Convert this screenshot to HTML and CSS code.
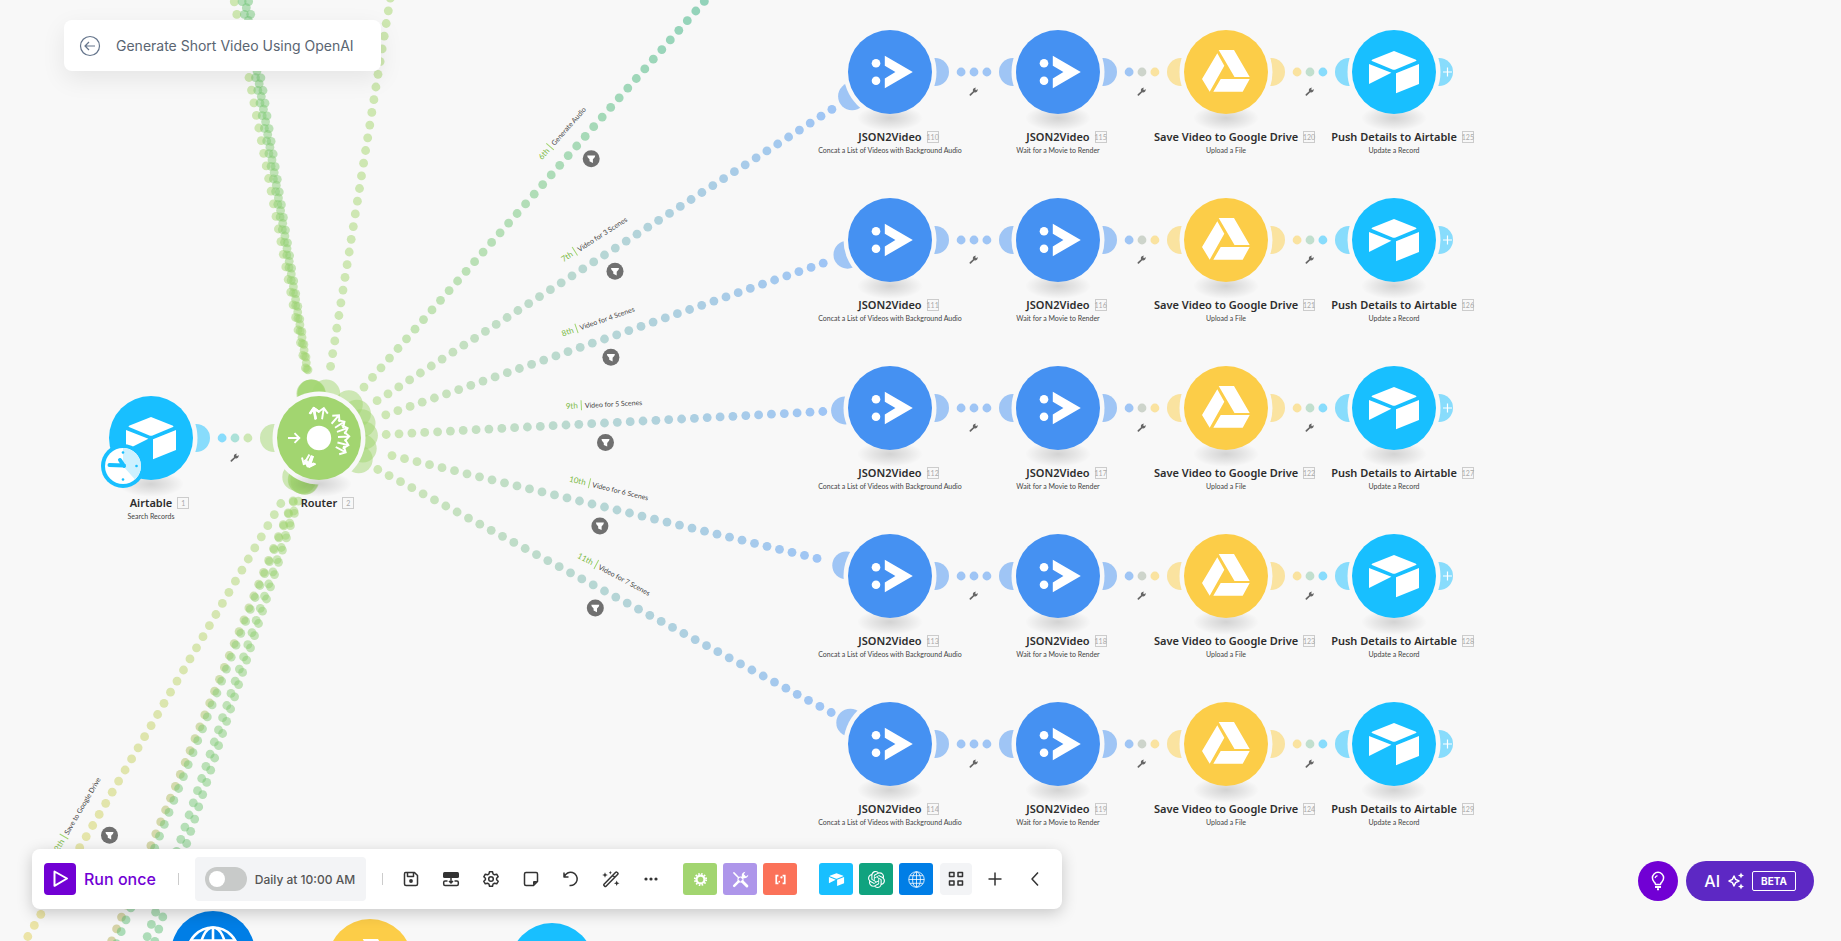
FILE: index.html
```html
<!DOCTYPE html>
<html lang="en">
<head>
<meta charset="utf-8">
<title>Generate Short Video Using OpenAI</title>
<link rel="stylesheet" href="styles.css">
</head>
<body>
<svg class="symbols" aria-hidden="true">
  <symbol id="i-airtable" viewBox="-42 -42 84 84">
    <path d="M0-21 22-12.3Q23-11.6 22-11L1-2.3Q0-2-1-2.3L-22-11Q-23-11.6-22-12.3Z"/>
    <path d="M2 1.2 25-8V12L2 21.2ZM-25-8-2.6.8-25 12Z"/>
  </symbol>
  <symbol id="i-drive" viewBox="-42 -42 84 84">
    <path d="M-7.3-22H8L23.7 5H8.5ZM-8.7-18.7-1.7-6.3-16.3 19.7-24 7ZM-5.3 7H23.7L16.7 19.7H-12.7Z"/>
  </symbol>
  <symbol id="i-json" viewBox="-42 -42 84 84">
    <circle cx="-14" cy="-8.7" r="4.3"/><circle cx="-14" cy="8.8" r="4.3"/>
    <path d="M-5.2-16.2 22.8 0-5.2 16.2V6.6L5.4 0-5.2-6.3Z"/>
  </symbol>
  <symbol id="i-http" viewBox="-42 -42 84 84">
    <g fill="none" stroke="currentColor" stroke-width="2.6">
      <circle r="25.5"/><ellipse rx="13" ry="25.5"/><path d="M0-25.5V25.5M-25.5 0H25.5M-22-12.5H22M-22 12.5H22"/>
    </g>
  </symbol>
  <symbol id="i-wrench" viewBox="0 0 10 10">
    <path d="M9.4 2.3 7.9 3.6 6.7 2.3 8 .9A2.8 2.8 0 0 0 4.5 4.6L.8 8A1 1 0 0 0 2.2 9.4L5.8 5.9A2.8 2.8 0 0 0 9.4 2.3Z"/>
  </symbol>
  <symbol id="i-openai" viewBox="0 0 24 24">
    <path d="M22.2819 9.8211a5.9847 5.9847 0 0 0-.5157-4.9108 6.0462 6.0462 0 0 0-6.5098-2.9A6.0651 6.0651 0 0 0 4.9807 4.1818a5.9847 5.9847 0 0 0-3.9977 2.9 6.0462 6.0462 0 0 0 .7427 7.0966 5.98 5.98 0 0 0 .511 4.9107 6.051 6.051 0 0 0 6.5146 2.9001A5.9847 5.9847 0 0 0 13.2599 24a6.0557 6.0557 0 0 0 5.7718-4.2058 5.9894 5.9894 0 0 0 3.9977-2.9001 6.0557 6.0557 0 0 0-.7475-7.0729zm-9.022 12.6081a4.4755 4.4755 0 0 1-2.8764-1.0408l.1419-.0804 4.7783-2.7582a.7948.7948 0 0 0 .3927-.6813v-6.7369l2.02 1.1686a.071.071 0 0 1 .038.052v5.5826a4.504 4.504 0 0 1-4.4945 4.4944zm-9.6607-4.1254a4.4708 4.4708 0 0 1-.5346-3.0137l.142.0852 4.783 2.7582a.7712.7712 0 0 0 .7806 0l5.8428-3.3685v2.3324a.0804.0804 0 0 1-.0332.0615L9.74 19.9502a4.4992 4.4992 0 0 1-6.1408-1.6464zM2.3408 7.8956a4.485 4.485 0 0 1 2.3655-1.9728V11.6a.7664.7664 0 0 0 .3879.6765l5.8144 3.3543-2.0201 1.1685a.0757.0757 0 0 1-.071 0l-4.8303-2.7865A4.504 4.504 0 0 1 2.3408 7.872zm16.5963 3.8558L13.1038 8.364 15.1192 7.2a.0757.0757 0 0 1 .071 0l4.8303 2.7913a4.4944 4.4944 0 0 1-.6765 8.1042v-5.6772a.79.79 0 0 0-.407-.667zm2.0107-3.0231l-.142-.0852-4.7735-2.7818a.7759.7759 0 0 0-.7854 0L9.409 9.2297V6.8974a.0662.0662 0 0 1 .0284-.0615l4.8303-2.7866a4.4992 4.4992 0 0 1 6.6802 4.66zM8.3065 12.863l-2.02-1.1638a.0804.0804 0 0 1-.038-.0567V6.0742a4.4992 4.4992 0 0 1 7.3757-3.4537l-.142.0805L8.704 5.459a.7948.7948 0 0 0-.3927.6813zm1.0976-2.3654l2.602-1.4998 2.6069 1.4998v2.9994l-2.5974 1.4997-2.6067-1.4997Z"/>
  </symbol>
  <radialGradient id="shade"><stop offset="0" stop-color="#000" stop-opacity=".15"/><stop offset=".5" stop-color="#000" stop-opacity=".08"/><stop offset="1" stop-color="#000" stop-opacity="0"/></radialGradient>
</svg>

<main class="canvas" id="canvas">
  <svg class="links" id="links" aria-hidden="true"></svg>
</main>

<header class="title-bar">
  <button class="back" type="button" aria-label="Back">
    <svg viewBox="0 0 22 22"><circle cx="11" cy="11" r="9.5"/><path d="M16 11H6.2M10 7 6 11 10 15"/></svg>
  </button>
  <h1 class="title">Generate Short Video Using OpenAI</h1>
</header>

<div class="toolbar" role="toolbar" aria-label="Scenario controls">
  <button class="run" type="button">
    <span class="run-icon"><svg viewBox="0 0 32 32"><path d="M10.500 8.500 23 15.500 10.500 22.800Z"/></svg></span>
    Run once
  </button>
  <span class="divider"></span>
  <label class="schedule">
    <input class="toggle" type="checkbox" role="switch">
    <span>Daily at 10:00 AM</span>
  </label>
  <span class="divider"></span>
  <div class="tools">
    <button class="tool" type="button" aria-label="Save"><svg viewBox="0 0 18 18"><path d="M3.500 2.500H12.500L15.500 5.500V14Q15.500 15.500 14 15.500H4Q2.500 15.500 2.500 14V4Q2.500 2.500 3.500 2.500ZM5.500 3V6.500H11.500V3"/><circle class="solid" cx="9" cy="11" r="1.900"/></svg></button>
    <button class="tool" type="button" aria-label="Align"><svg viewBox="0 0 18 18"><rect class="solid" x="1" y="2" width="16" height="6" rx="1.500"/><path d="M5.500 11H3Q1.700 11 1.700 12.300V14Q1.700 15.500 3 15.500H15Q16.300 15.500 16.300 14V12.300Q16.300 11 15 11H12.500M9 8V12.500M7 11 9 13 11 11"/></svg></button>
    <button class="tool" type="button" aria-label="Settings"><svg viewBox="0 0 18 18"><circle cx="9" cy="9" r="2.300"/><path d="M7.500 1.700H10.500L11 3.900 12.500 4.800 14.700 4.200 16.200 6.800 14.600 8.300V9.800L16.200 11.300 14.700 13.800 12.500 13.200 11 14.100 10.500 16.300H7.500L7 14.100 5.500 13.200 3.300 13.800 1.800 11.300 3.400 9.800V8.300L1.800 6.800 3.300 4.200 5.500 4.800 7 3.900Z"/></svg></button>
    <button class="tool" type="button" aria-label="Notes"><svg viewBox="0 0 18 18"><path d="M4 2.500H14.200Q15.500 2.500 15.500 4V11.500L11.500 15.500H4Q2.500 15.500 2.500 14V4Q2.500 2.500 4 2.500Z"/><path class="solid" d="M11 15.500V12Q11 11 12 11H15.500Z"/></svg></button>
    <button class="tool" type="button" aria-label="Undo"><svg viewBox="0 0 18 18"><path d="M2 2.500V7H6.500M2.400 6.600A6.600 6.600 0 1 1 7.500 15.400"/></svg></button>
    <button class="tool" type="button" aria-label="Auto-align"><svg viewBox="0 0 18 18"><path d="M2 14.200 13.700 2.300Q14.400 1.700 15 2.300L15.800 3Q16.400 3.700 15.800 4.300L4 16.200Q3.300 16.800 2.700 16.200L2 15.500Q1.400 14.900 2 14.200ZM10.700 5.300 12.900 7.300"/><path class="solid" d="M3 2.200 3.800 4.200 5.800 5 3.800 5.800 3 7.800 2.200 5.800.2 5 2.200 4.200ZM14.700 10.500 15.500 12.500 17.500 13.300 15.500 14.100 14.700 16.100 13.900 14.100 11.900 13.300 13.900 12.500ZM8.300.8 8.800 2.300 10 2.800 8.800 3.300 8.300 4.500 7.800 3.300 6.800 2.800 7.800 2.300Z"/></svg></button>
    <button class="tool" type="button" aria-label="More"><svg viewBox="0 0 18 18"><g class="solid"><circle cx="4" cy="9" r="1.600"/><circle cx="9" cy="9" r="1.600"/><circle cx="14" cy="9" r="1.600"/></g></svg></button>
  </div>
  <div class="tiles">
    <button class="tile tile-flow" type="button" aria-label="Flow control"><svg viewBox="0 0 18 18"><circle cx="9" cy="9" r="4.200" fill="none" stroke="currentColor" stroke-width="2.400"/><circle cx="9" cy="9" r="6" fill="none" stroke="currentColor" stroke-width="2" stroke-dasharray="1.600 1.540"/></svg></button>
    <button class="tile tile-tools" type="button" aria-label="Tools"><svg viewBox="0 0 18 18"><g fill="none" stroke="currentColor" stroke-linecap="round"><path d="M2 2 6.800 6.800" stroke-width="1.600"/><path d="M11 11 15.800 15.800" stroke-width="3"/><path d="M12.300 5.700 11 7M7 11 2.300 15.700" stroke-width="2.600"/><circle cx="9" cy="9" r="2.700" stroke-width="1.200"/></g><path d="M17.300 4 14.800 5.800 12.500 3.500 14.200 .8A4 4 0 0 0 10.500 6L12.500 7.700A4 4 0 0 0 17.300 4Z"/></svg></button>
    <button class="tile tile-parser" type="button" aria-label="Text parser"><svg viewBox="0 0 18 18"><path d="M6.800 5H4.500V13H6.800M11.200 5H13.500V13H11.200" fill="none" stroke="currentColor" stroke-width="1.800"/><circle cx="7.700" cy="11.300" r=".9"/><circle cx="10" cy="6.800" r="1.200"/></svg></button>
  </div>
  <div class="tiles tiles-apps">
    <button class="tile tile-airtable" type="button" aria-label="Airtable"><svg viewBox="-28 -28 56 56"><use href="#i-airtable" x="-42" y="-42" width="84" height="84"/></svg></button>
    <button class="tile tile-openai" type="button" aria-label="OpenAI"><svg viewBox="0 0 24 24"><use href="#i-openai"/></svg></button>
    <button class="tile tile-http" type="button" aria-label="HTTP"><svg viewBox="-28 -28 56 56"><use href="#i-http" x="-42" y="-42" width="84" height="84"/></svg></button>
  </div>
  <button class="tool grid-tool" type="button" aria-label="All apps"><svg viewBox="0 0 18 18"><path d="M2.500 2.500H7V6.500H2.500ZM11 2.500H15.500V6.500H11ZM2.500 11H7V15H2.500ZM11 11H15.500V15H11Z"/></svg></button>
  <button class="tool" type="button" aria-label="Add module"><svg viewBox="0 0 18 18"><path d="M9 2.500V15.500M2.500 9H15.500"/></svg></button>
  <button class="tool" type="button" aria-label="Collapse"><svg viewBox="0 0 18 18"><path d="M12 2.500 6 9 12 15.500"/></svg></button>
</div>

<div class="assist">
  <button class="hint" type="button" aria-label="Tips"><svg viewBox="0 0 20 20"><path d="M7.500 13.500Q7.500 12 6 10.800A5.600 5.600 0 1 1 14 10.800Q12.500 12 12.500 13.500Z"/><path d="M7 7A3.200 3.200 0 0 1 9.500 4.600" stroke-width="1.200"/><path d="M7 16H13M9 18.300H11" stroke-width="2"/></svg></button>
  <button class="ai" type="button">
    <span>AI</span>
    <svg viewBox="0 0 18 18"><path d="M7 4 8.600 7.400 12 9 8.600 10.600 7 14 5.400 10.600 2 9 5.400 7.400Z"/><path class="solid" d="M14 .5 14.900 2.600 17 3.500 14.900 4.400 14 6.500 13.100 4.400 11 3.500 13.100 2.600ZM14 11.500 14.900 13.600 17 14.500 14.900 15.400 14 17.500 13.100 15.400 11 14.500 13.100 13.600Z"/></svg>
    <span class="beta">BETA</span>
  </button>
</div>
<script src="canvas.js"></script>
</body>
</html>
```
FILE: styles.css
```css
* { box-sizing: border-box; }

body {
  margin: 0;
  min-height: 100vh;
  overflow: hidden;
  background: #f8f8f8;
  font-family: Inter, "Liberation Sans", sans-serif;
  color: #2d2d2d;
}

button {
  margin: 0;
  padding: 0;
  border: 0;
  background: none;
  font: inherit;
  color: inherit;
  cursor: pointer;
}

svg { display: block; }

.symbols { position: absolute; width: 0; height: 0; }

/* canvas */
.canvas {
  position: relative;
  height: 100vh;
  overflow: hidden;
  font-family: Lato, "Open Sans", sans-serif;
}

.links { width: 100%; height: 100%; }

.node {
  position: absolute;
  display: flex;
  flex-direction: column;
  align-items: center;
  width: 168px;
  margin: -42px 0 0 -84px;
}

.disc { width: 84px; height: 84px; border-radius: 50%; color: #fff; fill: #fff; }
.airtable { background: #18bfff; }
.drive { background: #fccd48; }
.json { background: #4591f2; }
.http { background: #007ee6; }
.router { background: #a2d570; }

.name {
  position: relative;
  margin: 15px 0 0;
  font-family: "Noto Sans", "Open Sans", sans-serif;
  font-size: 11px;
  line-height: 16px;
  font-weight: 600;
  white-space: nowrap;
}

.badge {
  position: absolute;
  left: calc(100% + 5px);
  top: 2px;
  width: 12px;
  height: 12px;
  border: 1px solid #ccc;
  font-family: Lato, "Open Sans", sans-serif;
  font-size: 7px;
  line-height: 10px;
  font-weight: 400;
  color: #aaa;
  display: flex;
  justify-content: center;
}

.note {
  margin: 0;
  font-size: 7px;
  line-height: 10px;
  white-space: nowrap;
  color: #444;
}

.clock { position: absolute; left: 33px; top: 47px; width: 46px; height: 46px; }

.route {
  position: absolute;
  display: flex;
  align-items: center;
  gap: 3px;
  font-size: 7px;
  line-height: 10px;
  white-space: nowrap;
  color: #444;
}

.route-order {
  padding-right: 3px;
  border-right: 1px solid #a2d570;
  font-size: 8px;
  color: #79b843;
}

/* title */
.title-bar {
  position: absolute;
  left: 64px;
  top: 20px;
  display: flex;
  align-items: center;
  gap: 15px;
  padding: 14px 27px 14px 15px;
  border-radius: 8px;
  background: #fff;
  box-shadow: 0 8px 24px rgba(0, 0, 0, .08);
}

.back svg {
  width: 22px;
  height: 22px;
  fill: none;
  stroke: #64748b;
  stroke-width: 1.2;
}

.title {
  margin: 0;
  font-size: 14px;
  line-height: 23px;
  font-weight: 400;
  color: #5a6572;
}

/* toolbar */
.toolbar {
  position: absolute;
  left: 32px;
  bottom: 32px;
  display: flex;
  align-items: center;
  height: 60px;
  padding: 0 7px 0 12px;
  border-radius: 8px;
  background: #fff;
  box-shadow: 0 4px 16px rgba(0, 0, 0, .2);
}

.run {
  display: flex;
  align-items: center;
  gap: 8px;
  font-size: 16px;
  font-weight: 500;
  color: #7100d4;
}

.run-icon { border-radius: 4px; background: #7100d4; }
.run-icon svg { width: 32px; height: 32px; fill: none; stroke: #fff; stroke-width: 2; stroke-linejoin: round; }

.divider { width: 1px; height: 12px; background: #ccc; margin: 0 16px 0 22px; }
.schedule + .divider { margin: 0 8px 0 16px; }

.schedule {
  display: flex;
  align-items: center;
  gap: 8px;
  height: 44px;
  padding: 0 11px 0 10px;
  border-radius: 4px;
  background: #f3f4f6;
  font-size: 12px;
  font-weight: 500;
  color: #555;
}

.toggle {
  appearance: none;
  display: flex;
  align-items: center;
  width: 42px;
  height: 24px;
  margin: 0;
  padding: 4px;
  border-radius: 12px;
  background: #c8cac9;
}
.toggle::before { content: ""; width: 16px; height: 16px; border-radius: 50%; background: #fff; }
.toggle:checked { justify-content: flex-end; background: #7100d4; }

.tools { display: flex; margin-right: 12px; }
.tool { display: flex; align-items: center; justify-content: center; width: 40px; height: 32px; }
.tool svg { width: 18px; height: 18px; fill: none; stroke: #333; stroke-width: 1.5; stroke-linejoin: round; }
.tool .solid { fill: #333; stroke: none; }

.tiles { display: flex; gap: 6px; }
.tiles-apps { margin-left: 22px; }
.tile { display: flex; align-items: center; justify-content: center; width: 34px; height: 32px; border-radius: 3px; color: #fff; fill: #fff; }
.tile svg { width: 17px; height: 17px; }
.tile-flow { background: #a2d570; }
.tile-tools { background: #ae96ea; }
.tile-parser { background: #fb7259; }
.tile-airtable { background: #18bfff; }
.tile-openai { background: #10a37f; }
.tile-http { background: #007ee6; }

.grid-tool { width: 32px; margin: 0 3px 0 7px; border-radius: 4px; background: #f3f4f6; }

/* assistant buttons */
.assist {
  position: absolute;
  right: 27px;
  bottom: 40px;
  display: flex;
  gap: 8px;
}

.hint, .ai { display: flex; align-items: center; height: 40px; border-radius: 20px; }
.hint { justify-content: center; width: 40px; background: #7100d4; }
.hint svg, .ai svg { width: 20px; height: 20px; fill: none; stroke: #fff; stroke-width: 1.5; stroke-linejoin: round; }
.ai {
  gap: 7px;
  padding: 0 18px;
  background: #5d28c4;
  font-size: 16px;
  font-weight: 500;
  color: #fff;
}
.ai svg { width: 18px; height: 18px; }
.ai .solid { fill: #fff; stroke: none; }
.beta {
  width: 44px;
  border: 1px solid #fff;
  border-radius: 2px;
  font-size: 10px;
  line-height: 18px;
  font-weight: 700;
}
```
FILE: canvas.js
```js
const COLORS = { airtable: '#18bfff', drive: '#fccd48', json: '#4591f2', http: '#007ee6', router: '#a2d570', openai: '#10a37f' };
const PORT = 45, STEP = 12.86, CLEAR = 66;

const nodes = [
  { kind: 'airtable', x: 151, y: 438, name: 'Airtable', id: 1, note: 'Search Records', clock: true },
  { kind: 'router', x: 319, y: 438, name: 'Router', id: 2 },
  { kind: 'http', x: 213, y: 953 },
  { kind: 'drive', x: 370, y: 961 },
  { kind: 'airtable', x: 552, y: 965 },
];
const links = [];
const start = nodes[0], router = nodes[1];

[72, 240, 408, 576, 744].forEach((y, i) => {
  const row = [
    { kind: 'json', x: 890, y, name: 'JSON2Video', id: 110 + i, note: 'Concat a List of Videos with Background Audio' },
    { kind: 'json', x: 1058, y, name: 'JSON2Video', id: 115 + i, note: 'Wait for a Movie to Render' },
    { kind: 'drive', x: 1226, y, name: 'Save Video to Google Drive', id: 120 + i, note: 'Upload a File' },
    { kind: 'airtable', x: 1394, y, name: 'Push Details to Airtable', id: 125 + i, note: 'Update a Record', open: true },
  ];
  nodes.push(...row);
  for (let k = 0; k < 3; k++) links.push({ a: row[k], b: row[k + 1], wrench: true });
  links.push({ a: router, b: row[0], order: `${7 + i}th`, label: `Video for ${3 + i} Scenes` });
});
links.push({ a: start, b: router, wrench: true });

/* routes that lead to modules outside the visible area */
[
  [834.4, -146, COLORS.openai, '6th', 'Generate Audio'],
  [-133.6, 1213, COLORS.drive, '12th', 'Save to Google Drive'],
  [-125, 1515, '#ca7e36'],
  [-114.8, 1521, COLORS.openai],
  [-66.4, 1556.7, COLORS.openai],
  [-41.2, 1542.5, COLORS.openai],
  [507, -721, '#a8d45c'],
  [95.8, -712.2, '#a8d45c'],
  [116.2, -713.3, COLORS.openai],
  [133.2, -714.1, COLORS.openai],
  [122.2, -726.9, COLORS.openai],
].forEach(([x, y, color, order, label]) => links.push({ a: router, b: { x, y, color }, order, label }));

const rgb = hex => [1, 3, 5].map(i => parseInt(hex.slice(i, i + 2), 16));
const mix = (from, to, t) => {
  const a = rgb(from), b = rgb(to);
  return `rgb(${a.map((v, i) => Math.round(v + (b[i] - v) * t))})`;
};
const colorOf = n => n.color || COLORS[n.kind];
const dot = (x, y, r, fill) => `<circle cx="${x.toFixed(1)}" cy="${y.toFixed(1)}" r="${r}" fill="${fill}" fill-opacity=".5"/>`;

const canvas = document.getElementById('canvas');
let dots = '', ports = '', marks = '', discs = '', arrows = '', html = '';

for (const { a, b, wrench, order, label } of links) {
  const dx = b.x - a.x, dy = b.y - a.y, length = Math.hypot(dx, dy);
  const ux = dx / length, uy = dy / length;
  const mx = a.x + dx / 2, my = a.y + dy / 2;
  const half = Math.floor((length / 2 - CLEAR) / STEP);
  for (let k = -half; k <= half; k++) {
    const d = length / 2 + k * STEP;
    dots += dot(a.x + ux * d, a.y + uy * d, 4.4, mix(colorOf(a), colorOf(b), (k + half) / (2 * half)));
  }
  ports += dot(a.x + ux * PORT, a.y + uy * PORT, 14, colorOf(a));
  if (b.kind) ports += dot(b.x - ux * PORT, b.y - uy * PORT, 14, colorOf(b));
  if (a === router) {
    const angle = Math.atan2(dy, dx) * 180 / Math.PI;
    arrows += `<path transform="rotate(${angle.toFixed(1)})" d="M19 0H30M25.500-4.800 30.300 0 25.500 4.800"/>`;
  }
  if (wrench) marks += `<use href="#i-wrench" x="${mx - 5}" y="${my + 15}" width="9" height="9" fill="#666"/>`;
  if (label) {
    const side = ux < 0 ? -1 : 1;
    const fx = mx - uy * 19.4 * side, fy = my + ux * 19.4 * side;
    marks += `<g transform="translate(${fx.toFixed(1)} ${fy.toFixed(1)})"><circle r="8.500" fill="#707070"/><path d="M-4-3.300H4Q4.200-1.500 1.700.5V4.200L-1.700 2.500V.5Q-4.200-1.500-4-3.300Z" fill="#fff"/></g>`;
    const lx = mx + uy * 19.4 * side, ly = my - ux * 19.4 * side;
    const turn = Math.atan2(dy * side, dx * side);
    html += `<div class="route" style="left:${lx.toFixed(1)}px;top:${ly.toFixed(1)}px;transform:translate(-50%,-50%) rotate(${turn.toFixed(3)}rad)"><span class="route-order">${order}</span><span>${label}</span></div>`;
  }
}

for (const n of nodes) {
  if (n.open) {
    ports += dot(n.x + PORT, n.y, 14, colorOf(n));
    marks += `<path d="M${n.x + 49} ${n.y}h9m-4.500-4.500v9" stroke="#fff" stroke-width="1.200"/>`;
  }
  discs += `<circle cx="${n.x}" cy="${n.y}" r="46.500" fill="#f8f8f8"/>`;
  discs += `<ellipse cx="${n.x}" cy="${n.y + 46}" rx="33" ry="13" fill="url(#shade)"/>`;
  const icon = n.kind === 'router'
    ? `<svg class="disc router" viewBox="-42 -42 84 84"><circle r="12.200"/><g fill="none" stroke="#fff" stroke-width="1.900"><path d="M-31 0H-20M-24.500-4.800-19.700 0-24.500 4.800"/>${arrows}</g></svg>`
    : `<svg class="disc ${n.kind}"><use href="#i-${n.kind}"/></svg>`;
  const clock = n.clock
    ? `<svg class="clock" viewBox="-23 -23 46 46"><circle r="22" fill="#18bfff"/><circle r="18" fill="#fff"/><path d="M0 0V-18A18 18 0 0 1 12 13.400Z" fill="#cdf1ff"/><path d="M1-.5-13.500-1M1 0-3-6" stroke="#18bfff" stroke-width="4" stroke-linecap="round"/><g fill="#18bfff"><circle cy="-13.500" r="1.300"/><circle cx="13.500" r="1.300"/><circle cy="13.500" r="1.300"/></g></svg>`
    : '';
  const name = n.name ? `<p class="name">${n.name}<span class="badge">${n.id}</span></p>` : '';
  const note = n.note ? `<p class="note">${n.note}</p>` : '';
  html += `<div class="node" style="left:${n.x}px;top:${n.y}px">${icon}${clock}${name}${note}</div>`;
}

document.getElementById('links').innerHTML = dots + ports + discs + marks;
canvas.insertAdjacentHTML('beforeend', html);
```
